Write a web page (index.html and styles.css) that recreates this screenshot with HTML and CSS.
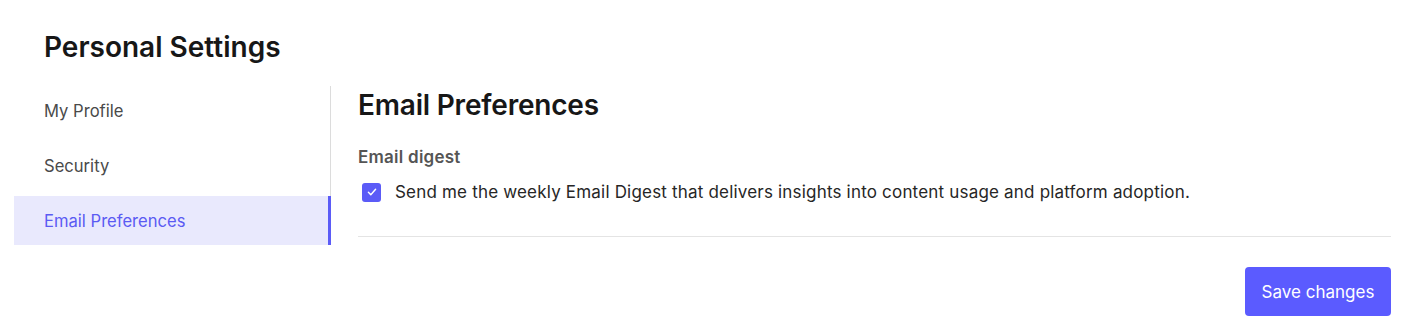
FILE: index.html
```html
<!DOCTYPE html>
<html lang="en">
<head>
<meta charset="utf-8">
<title>Personal Settings</title>
<link rel="stylesheet" href="styles.css">
</head>
<body>
<div class="page">
  <h1 class="page-title">Personal Settings</h1>
  <div class="layout">
    <nav class="sidenav">
      <a class="nav-item" href="#">My Profile</a>
      <a class="nav-item" href="#">Security</a>
      <a class="nav-item active" href="#">Email Preferences</a>
    </nav>
    <main class="content">
      <h2 class="section-title">Email Preferences</h2>
      <div class="field-label">Email digest</div>
      <label class="check-row">
        <span class="checkbox">
          <svg viewBox="0 0 20 20" width="12" height="12"><path d="M4 10.5l4 4 8-9" fill="none" stroke="#fff" stroke-width="2.4" stroke-linecap="round" stroke-linejoin="round"/></svg>
        </span>
        <span class="check-text">Send me the weekly Email Digest that delivers insights into content usage and platform adoption.</span>
      </label>
      <hr class="divider">
      <div class="actions">
        <button class="btn-primary" type="button">Save changes</button>
      </div>
    </main>
  </div>
</div>
</body>
</html>
```

FILE: styles.css
```css
* { box-sizing: border-box; }
html, body { margin: 0; padding: 0; background: #fff; }
body {
  font-family: Inter, "Noto Sans", "Liberation Sans", sans-serif;
  color: #1a1a1a;
}
.page {
  padding: 0 19px 0 14px;
}
.page-title {
  margin: 30px 0 22px 30px;
  font-size: 28px;
  line-height: 34px;
  font-weight: 600;
  color: #171717;
}
.layout {
  display: flex;
  align-items: flex-start;
}
.sidenav {
  width: 317px;
  flex: none;
  display: flex;
  flex-direction: column;
  gap: 6px;
  border-right: 1px solid #dcdcdc;
}
.nav-item {
  height: 49px;
  display: flex;
  align-items: center;
  padding-left: 30px;
  font-size: 16.6px;
  color: #4a4a4a;
  text-decoration: none;
}
.nav-item.active {
  background: #e9e9fd;
  color: #5b5bf3;
  border-right: 3px solid #5b5bf7;
  margin-right: -1px;
}
.content {
  flex: 1;
  padding: 2px 0 0 27px;
}
.section-title {
  margin: 0 0 23px 0;
  font-size: 28px;
  line-height: 34px;
  font-weight: 600;
  color: #171717;
  letter-spacing: -0.2px;
}
.field-label {
  font-size: 17px;
  line-height: 24px;
  font-weight: 600;
  color: #555;
  letter-spacing: 0.25px;
  margin-bottom: 11px;
}
.check-row {
  display: flex;
  align-items: center;
  gap: 14px;
  padding-left: 4px;
  height: 24px;
}
.checkbox {
  width: 19px;
  height: 19px;
  border-radius: 3px;
  background: #5b5bf7;
  display: flex;
  align-items: center;
  justify-content: center;
  flex: none;
}
.check-text {
  font-size: 17px;
  line-height: 24px;
  color: #262626;
  letter-spacing: 0.19px;
}
.divider {
  border: 0;
  border-top: 1px solid #e4e4e4;
  margin: 32px 0 0 0;
}
.actions {
  display: flex;
  justify-content: flex-end;
  padding-top: 30px;
}
.btn-primary {
  width: 146px;
  height: 49px;
  border: 0;
  border-radius: 4px;
  background: #5b5bff;
  color: #fff;
  font-family: inherit;
  font-size: 17px;
}
```
